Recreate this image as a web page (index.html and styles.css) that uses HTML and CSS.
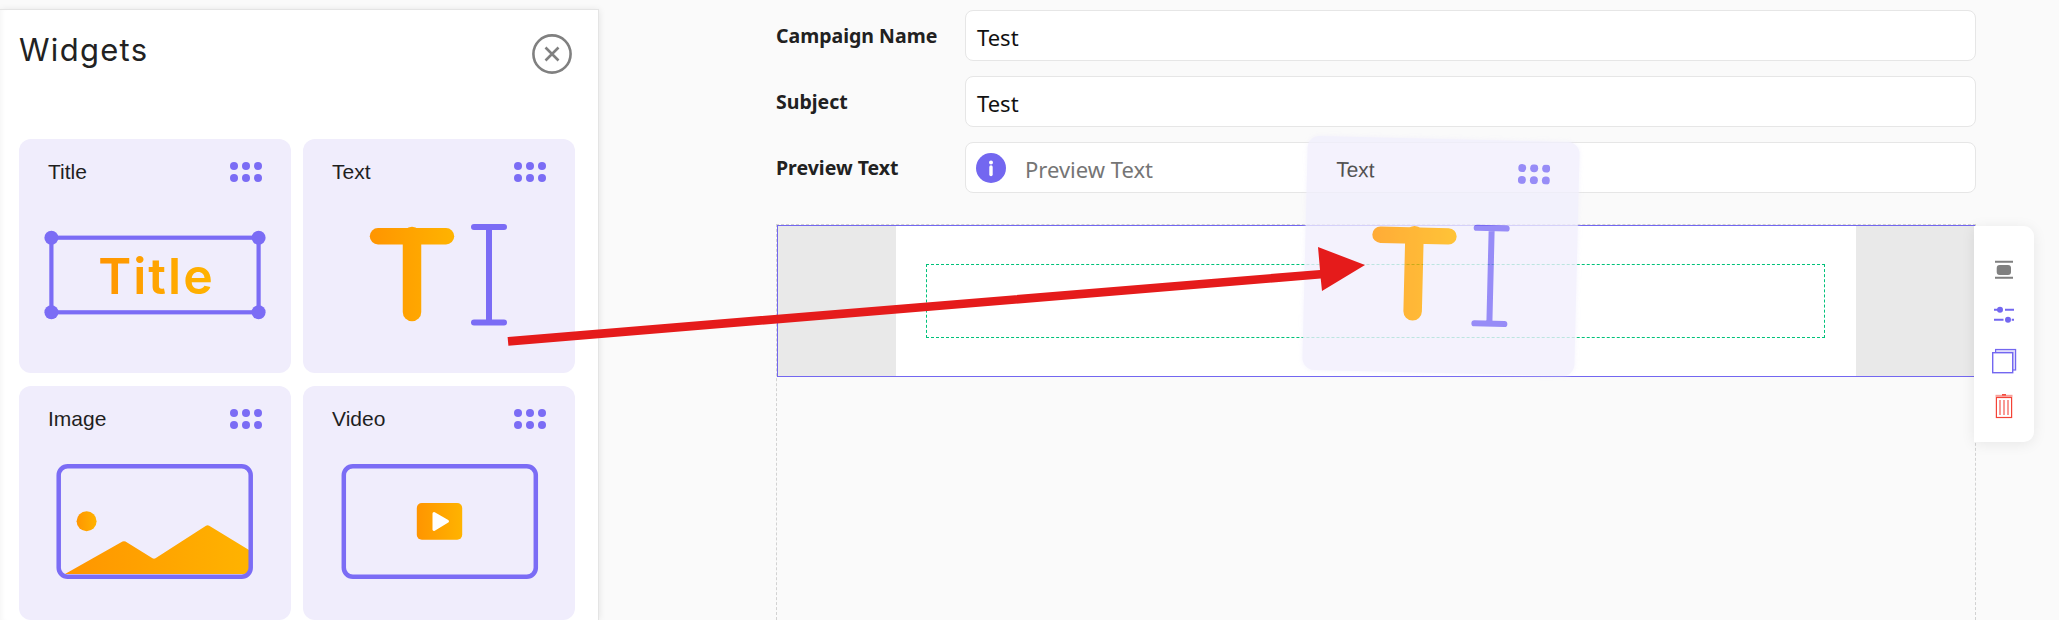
FILE: index.html
```html
<!DOCTYPE html>
<html lang="en">
<head>
<meta charset="utf-8">
<title>Campaign editor</title>
<link rel="stylesheet" href="styles.css">
</head>
<body>
<aside class="panel">
  <header class="panel-head">
    <h2 class="panel-title">Widgets</h2>
    <svg class="close" viewBox="0 0 40 40"><circle cx="20" cy="20" r="18.6" fill="none" stroke="#808080" stroke-width="2.6"/><path d="M13.5 13.5 26.5 26.5M26.5 13.5 13.5 26.5" stroke="#808080" stroke-width="2.6" fill="none"/></svg>
  </header>
  <div class="cards">
    <article class="card">
      <div class="card-head"><span class="card-name">Title</span><svg class="dots" viewBox="0 0 32 20"><g fill="#7b6cf5"><circle cx="4" cy="4" r="4"/><circle cx="16" cy="4" r="4"/><circle cx="28" cy="4" r="4"/><circle cx="4" cy="16" r="4"/><circle cx="16" cy="16" r="4"/><circle cx="28" cy="16" r="4"/></g></svg></div>
      <svg class="card-icon" viewBox="0 0 272 168">
        <defs><linearGradient id="g1" gradientUnits="userSpaceOnUse" x1="80" x2="193" y1="0" y2="0"><stop offset="0" stop-color="#ff9500"/><stop offset="1" stop-color="#ffb300"/></linearGradient></defs>
        <rect x="32.4" y="32.7" width="207.2" height="74.6" fill="none" stroke="#7b6cf5" stroke-width="4.2"/>
        <g fill="#7b6cf5"><circle cx="32.4" cy="32.7" r="7"/><circle cx="239.6" cy="32.7" r="7"/><circle cx="32.4" cy="107.3" r="7"/><circle cx="239.6" cy="107.3" r="7"/></g>
        <text class="icon-word" x="137.5" y="89" text-anchor="middle" fill="url(#g1)">Title</text>
      </svg>
    </article>
    <article class="card">
      <div class="card-head"><span class="card-name">Text</span><svg class="dots" viewBox="0 0 32 20"><g fill="#7b6cf5"><circle cx="4" cy="4" r="4"/><circle cx="16" cy="4" r="4"/><circle cx="28" cy="4" r="4"/><circle cx="4" cy="16" r="4"/><circle cx="16" cy="16" r="4"/><circle cx="28" cy="16" r="4"/></g></svg></div>
      <svg class="card-icon" viewBox="0 0 272 168">
        <defs><linearGradient id="g2" gradientUnits="userSpaceOnUse" x1="67" x2="151" y1="0" y2="0"><stop offset="0" stop-color="#ff9500"/><stop offset="1" stop-color="#ffb300"/></linearGradient></defs>
        <path d="M75 31.2H143" stroke="url(#g2)" stroke-width="16.4" stroke-linecap="round" fill="none"/>
        <path d="M109 31V107" stroke="url(#g2)" stroke-width="18.5" stroke-linecap="round" fill="none"/>
        <path d="M186 22V117.5M171 22H201M171 117.5H201" stroke="#7b6cf5" stroke-width="6" stroke-linecap="round" fill="none"/>
      </svg>
    </article>
    <article class="card">
      <div class="card-head"><span class="card-name">Image</span><svg class="dots" viewBox="0 0 32 20"><g fill="#7b6cf5"><circle cx="4" cy="4" r="4"/><circle cx="16" cy="4" r="4"/><circle cx="28" cy="4" r="4"/><circle cx="4" cy="16" r="4"/><circle cx="16" cy="16" r="4"/><circle cx="28" cy="16" r="4"/></g></svg></div>
      <svg class="card-icon" viewBox="0 0 272 168">
        <defs><linearGradient id="g3" gradientUnits="userSpaceOnUse" x1="46" x2="230" y1="0" y2="0"><stop offset="0" stop-color="#ff9500"/><stop offset="1" stop-color="#ffb300"/></linearGradient><linearGradient id="g3b" gradientUnits="userSpaceOnUse" x1="57" x2="78" y1="0" y2="0"><stop offset="0" stop-color="#ff9500"/><stop offset="1" stop-color="#ffb300"/></linearGradient></defs>
        <path d="M46 122 103.500 89.600Q105 88.800 106.500 89.600L133.500 106.300Q135 107.200 136.500 106.300L187 73.800Q188.600 72.900 190.200 73.800L230 98V116Q230 122 224 122Z" fill="url(#g3)"/>
        <circle cx="67.600" cy="69.300" r="10" fill="url(#g3b)"/>
        <rect x="39.700" y="14.200" width="192" height="110.600" rx="9" fill="none" stroke="#7b6cf5" stroke-width="4.500"/>
      </svg>
    </article>
    <article class="card">
      <div class="card-head"><span class="card-name">Video</span><svg class="dots" viewBox="0 0 32 20"><g fill="#7b6cf5"><circle cx="4" cy="4" r="4"/><circle cx="16" cy="4" r="4"/><circle cx="28" cy="4" r="4"/><circle cx="4" cy="16" r="4"/><circle cx="16" cy="16" r="4"/><circle cx="28" cy="16" r="4"/></g></svg></div>
      <svg class="card-icon" viewBox="0 0 272 168">
        <defs><linearGradient id="g4" gradientUnits="userSpaceOnUse" x1="114" x2="159" y1="0" y2="0"><stop offset="0" stop-color="#ff9500"/><stop offset="1" stop-color="#ffb300"/></linearGradient></defs>
        <rect x="40.800" y="14.200" width="192" height="110.600" rx="9" fill="none" stroke="#7b6cf5" stroke-width="4.500"/>
        <rect x="113.800" y="51" width="45.400" height="36.700" rx="5" fill="url(#g4)"/>
        <path d="M131 61.500 144.500 69.200 131 77.500Z" fill="#fff" stroke="#fff" stroke-width="3" stroke-linejoin="round"/>
      </svg>
    </article>
  </div>
</aside>

<main class="editor">
  <div class="field">
    <label class="field-label">Campaign Name</label>
    <div class="field-box">Test</div>
  </div>
  <div class="field">
    <label class="field-label">Subject</label>
    <div class="field-box">Test</div>
  </div>
  <div class="field">
    <label class="field-label">Preview Text</label>
    <div class="field-box field-box-info">
      <svg class="info" viewBox="0 0 30 30"><circle cx="15" cy="15" r="15" fill="#7367f0"/><circle cx="15" cy="9.500" r="2" fill="#fff"/><path d="M15 14V21.500" stroke="#fff" stroke-width="3.400" stroke-linecap="round"/></svg>
      <span class="placeholder">Preview Text</span>
    </div>
  </div>

  <div class="canvas">
    <section class="block">
      <div class="gutter"></div>
      <div class="block-body"><div class="dropzone"></div></div>
      <div class="gutter gutter-end"></div>
      <nav class="tools">
        <svg class="tool" viewBox="0 0 24 24"><path d="M3 3.700H21M3 19.700H21" stroke="#808080" stroke-width="2"/><rect x="4.700" y="7" width="14.300" height="10" rx="3" fill="#808080"/></svg>
        <svg class="tool" viewBox="0 0 24 24"><path d="M2 6.700H6M13 6.700H22M2 16.700H11.500M19.700 16.700H22" stroke="#7367f0" stroke-width="2"/><circle cx="8" cy="6.700" r="3" fill="#7367f0"/><circle cx="16" cy="16.700" r="3" fill="#7367f0"/></svg>
        <svg class="tool" viewBox="0 0 24 24"><rect x="3.600" y="0.500" width="20" height="20.500" fill="#dedbfb" stroke="#7367f0" stroke-width="1.200"/><rect x="0.700" y="3.700" width="20" height="20" fill="#fff" stroke="#7367f0" stroke-width="1.400"/></svg>
        <svg class="tool" viewBox="0 0 24 24"><path d="M3.500 1.800H20.500" stroke="#f8a09a" stroke-width="2"/><path d="M10 0.800H14" stroke="#f44336" stroke-width="1.500"/><rect x="4.400" y="3.500" width="15.200" height="20" fill="#fff" stroke="#f44336" stroke-width="1.200"/><path d="M8 6V21M12 6V21M16 6V21" stroke="#f8908a" stroke-width="1.800"/></svg>
      </nav>
    </section>
  </div>
</main>

<article class="card ghost">
  <div class="card-head"><span class="card-name">Text</span><svg class="dots" viewBox="0 0 32 20"><g fill="#7b6cf5"><circle cx="4" cy="4" r="4"/><circle cx="16" cy="4" r="4"/><circle cx="28" cy="4" r="4"/><circle cx="4" cy="16" r="4"/><circle cx="16" cy="16" r="4"/><circle cx="28" cy="16" r="4"/></g></svg></div>
  <svg class="card-icon" viewBox="0 0 272 168">
    <defs><linearGradient id="g5" gradientUnits="userSpaceOnUse" x1="67" x2="151" y1="0" y2="0"><stop offset="0" stop-color="#ff9500"/><stop offset="1" stop-color="#ffb300"/></linearGradient></defs>
    <path d="M75 31.200H143" stroke="url(#g5)" stroke-width="16.400" stroke-linecap="round" fill="none"/>
    <path d="M109 31V107" stroke="url(#g5)" stroke-width="18.500" stroke-linecap="round" fill="none"/>
    <path d="M186 22V117.500M171 22H201M171 117.500H201" stroke="#7b6cf5" stroke-width="6" stroke-linecap="round" fill="none"/>
  </svg>
</article>

<svg class="arrow" viewBox="0 0 2059 620"><path d="M508.400 345.800 507.600 337 1320 270 1318 247 1365 265 1322 291 1320.700 278.500Z" fill="#e51b1b"/></svg>
</body>
</html>
```

FILE: styles.css
```css
* { box-sizing: border-box; }
html, body { margin: 0; height: 620px; }
body {
  display: flex;
  overflow: hidden;
  position: relative;
  background: #fafafa;
  color: #212121;
}
.panel {
  flex: 0 0 597px;
  margin-top: 10px;
  padding: 0 23px 0 19px;
  background: #fff;
  box-shadow: 0 0 0 1px #e4e4e4, 1px 0 7px rgba(0, 0, 0, 0.1), inset 5px 0 5px -3px rgba(0, 0, 0, 0.04);
}
.panel-head {
  display: flex;
  justify-content: space-between;
  align-items: flex-start;
  height: 129px;
  padding-top: 24px;
}
.panel-title {
  margin: 0;
  font: 400 31px/32px Inter, sans-serif;
  letter-spacing: 1.3px;
  color: #222;
}
.close { width: 40px; height: 40px; margin-right: 3px; }
.cards {
  display: grid;
  grid-template-columns: 272px 272px;
  grid-auto-rows: 234px;
  column-gap: 12px;
  row-gap: 13px;
}
.card {
  background: #f0edfc;
  border-radius: 12px;
  overflow: hidden;
}
.card-head {
  display: flex;
  justify-content: space-between;
  align-items: center;
  height: 66px;
  padding: 0 29px;
}
.card-name { font: 400 21px/24px "Liberation Sans", Arial, sans-serif; color: #1f1f1f; }
.dots { width: 32px; height: 20px; }
.card-icon { display: block; width: 272px; height: 168px; }
.icon-word { font: 600 50px Inter, sans-serif; letter-spacing: 2px; }

.editor {
  flex: 1;
  min-width: 0;
  display: flex;
  flex-direction: column;
  gap: 15px;
  padding: 10px 83px 0 178px;
}
.field { display: flex; align-items: center; height: 51px; }
.field-label {
  flex: 0 0 189px;
  font: 700 19.5px/24px "Noto Sans", sans-serif;
  color: #212121;
}
.field-box {
  flex: 1;
  height: 51px;
  display: flex;
  align-items: center;
  padding: 2px 11px 0;
  background: #fff;
  border: 1px solid #e6e6e6;
  border-radius: 8px;
  font: 400 22px/26px "Noto Sans", sans-serif;
  color: #111;
}
.field-box-info { padding: 0 11px 0 10px; gap: 19px; }
.info { width: 30px; height: 30px; flex: none; }
.placeholder { color: #757575; position: relative; top: 1px; }

.canvas {
  flex: 1;
  margin-top: 16px;
  border: 1px dashed #d2d2d2;
  border-bottom: 0;
}
.block {
  position: relative;
  display: flex;
  height: 152px;
  background: #fff;
  border: 1px solid #7367f0;
}
.gutter { flex: 0 0 118px; background: #e9e9e9; }
.block-body { flex: 0 0 960px; padding: 38px 31px 38px 30px; }
.gutter-end { flex: 1; }
.dropzone { height: 74px; border: 1px dashed #00c27a; }
.tools {
  position: absolute;
  left: 100%;
  top: 0;
  width: 60px;
  height: 216px;
  padding-top: 32px;
  display: flex;
  flex-direction: column;
  align-items: center;
  gap: 21.4px;
  background: #fff;
  border-radius: 0 10px 10px 0;
  box-shadow: 0 2px 14px rgba(0, 0, 0, 0.08);
}
.tool { width: 24px; height: 24px; flex: none; overflow: visible; }

.ghost {
  position: absolute;
  left: 1305px;
  top: 139px;
  width: 272px;
  height: 234px;
  opacity: 0.78;
  background: #f1effd;
  box-shadow: 0 0 4px rgba(240, 237, 252, 0.7);
  transform: rotate(1.4deg);
}
.arrow {
  position: absolute;
  left: 0;
  top: 0;
  width: 2059px;
  height: 620px;
  pointer-events: none;
}
```
